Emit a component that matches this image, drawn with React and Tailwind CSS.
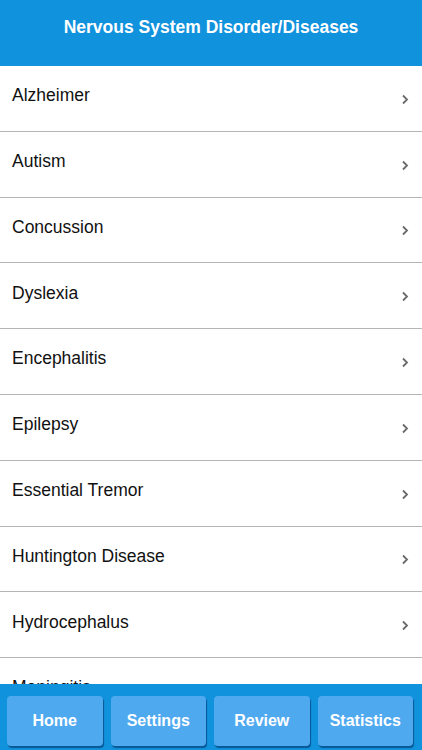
import React from "react";

const items = [
  "Alzheimer",
  "Autism",
  "Concussion",
  "Dyslexia",
  "Encephalitis",
  "Epilepsy",
  "Essential Tremor",
  "Huntington Disease",
  "Hydrocephalus",
  "Meningitis",
];

function Chevron() {
  return (
    <svg width="8" height="11" viewBox="0 0 8 11" className="shrink-0">
      <path d="M2 1.5 L6 5.5 L2 9.5" fill="none" stroke="#6b6b6b" strokeWidth="1.8" />
    </svg>
  );
}

export default function App() {
  return (
    <div
      className="relative w-[422px] h-[750px] overflow-hidden bg-white flex flex-col"
      style={{ fontFamily: '"Liberation Sans", Arial, sans-serif' }}
    >
      <div className="h-[66px] shrink-0 bg-[#1192dd] flex items-center justify-center pb-[12px]">
        <span className="text-white text-[17.5px] font-bold">
          Nervous System Disorder/Diseases
        </span>
      </div>
      <div className="flex-1 overflow-hidden">
        {items.map((it) => (
          <div
            key={it}
            className="h-[65.8px] flex items-center justify-between pl-[12px] pr-[13px] border-b border-[#b5b5b5]"
          >
            <span className="text-[17.5px] text-[#111] leading-none mb-[5px]">{it}</span>
            <div className="mt-[2px]">
              <Chevron />
            </div>
          </div>
        ))}
      </div>
      <div className="absolute left-0 right-0 bottom-0 h-[66px] bg-[#1192dd] grid grid-cols-4 gap-[8px] pl-[7px] pr-[9px] pt-[12px] pb-[4px]">
        {["Home", "Settings", "Review", "Statistics"].map((b) => (
          <div
            key={b}
            className="bg-[#4fa9ef] rounded-[4px] flex items-center justify-center text-white text-[16px] font-bold shadow-[1px_2px_1px_rgba(0,40,90,0.55)]"
          >
            {b}
          </div>
        ))}
      </div>
    </div>
  );
}
